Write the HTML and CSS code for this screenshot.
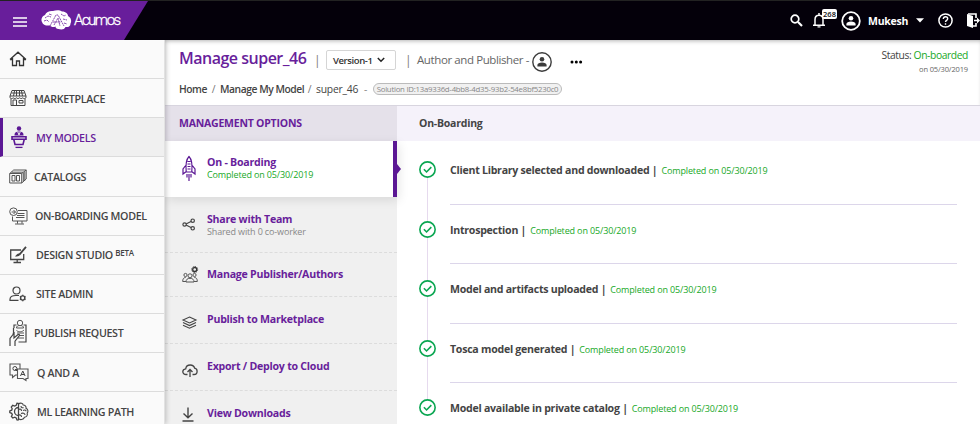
FILE: index.html
```html
<!DOCTYPE html>
<html lang="en">
<head>
<meta charset="utf-8">
<title>Acumos - Manage super_46</title>
<link rel="stylesheet" href="styles.css">
</head>
<body>
<header class="topbar">
  <div class="brand">
    <svg class="burger" width="14" height="10" viewBox="0 0 14 10"><path d="M0 1h14M0 5h14M0 9h14" stroke="#fff" stroke-width="1.5"/></svg>
    <svg class="logo" width="31" height="20" viewBox="0 0 31 20">
      <path d="M1 12C-.5 9 1.500 6 4 5c1-3 5-4.500 8-4 3-1 7-1 9 .5 4 0 6 2.500 6 4.500 3 1.500 4 5 2.500 7.500 0 3-2.500 4-5 3.500-1 2.500-4 3-7 2-2 0-3-1-3-2.500-2 1-4.500.5-5.500-1C5 16 2 15 1 12z" fill="#fff"/>
      <path d="M9 16l6-11h2l6 11M12 12h8M13 15l4-7 2 8M4 8l3-2 3 1M3 11l3-1 2 2M20 4l3 2 2-1M22 9l4 1M23 13l3 1M8 4l3 1" fill="none" stroke="#681e9b" stroke-width=".8" stroke-dasharray="2 .6"/>
    </svg>
    <span class="brand-name">Acumos</span>
  </div>
  <div class="tools">
    <svg class="t-search" width="13" height="13" viewBox="0 0 13 13"><circle cx="5" cy="5" r="3.800" fill="none" stroke="#fff" stroke-width="1.700"/><path d="M8 8l4 4" stroke="#fff" stroke-width="2.200"/></svg>
    <div class="bell">
      <svg width="12" height="15" viewBox="0 0 12 15"><path d="M0 12.200h12M2 12V6.500C2 3.500 3.500 2.200 6 2.200s4 1.300 4 4.300V12M6 0v2" fill="none" stroke="#fff" stroke-width="1.500"/><path d="M4.500 13.300h3v1.200h-3z" fill="#fff"/></svg>
      <span class="count">268</span>
    </div>
    <svg class="t-user" width="20" height="20" viewBox="0 0 20 20"><circle cx="10" cy="10" r="8.800" fill="none" stroke="#fff" stroke-width="1.800"/><circle cx="10" cy="7.200" r="2.300" fill="#fff"/><path d="M5.400 14.400v-1.300c0-1.600 2-2.500 4.600-2.500s4.600.9 4.600 2.500v1.300z" fill="#fff"/></svg>
    <span class="user-name">Mukesh</span>
    <svg class="t-caret" width="8" height="5" viewBox="0 0 8 5"><path d="M0 .3h8L4 4.600z" fill="#fff"/></svg>
    <svg class="t-help" width="15" height="15" viewBox="0 0 15 15"><circle cx="7.500" cy="7.500" r="6.600" fill="none" stroke="#fff" stroke-width="1.500"/><path d="M5.300 6c0-1.400 1-2.200 2.200-2.200S9.700 4.600 9.700 5.800c0 1.500-2.200 1.600-2.200 3.200M7.500 10.300v1.500" fill="none" stroke="#fff" stroke-width="1.400"/></svg>
    <svg class="t-exit" width="13" height="15" viewBox="0 0 13 15"><path d="M0 1l6 2v12l-6-2z" fill="#fff"/><path d="M1 1h8v4M9 10v3H6M7 7.500h5" fill="none" stroke="#fff" stroke-width="1.600"/><path d="M10 4.500l3 3-3 3z" fill="#fff"/></svg>
  </div>
</header>
<div class="layout">
  <nav class="sidebar">
    <a class="item home"><svg viewBox="0 0 18 16" width="18" height="16"><path d="M1 8.500L9 1.200l8 7.300M3.500 7v7.500h4V10h3v4.500h4V7M1 8.500h2.500M14.500 8.500H17" fill="none" stroke="#333" stroke-width="1.300"/></svg><span>HOME</span></a>
    <a class="item market"><svg viewBox="0 0 18 18" width="18" height="18"><path d="M3 1.500h12l2 5.500v1.800c-1 1-2.300 1-3.200 0-1 1-2.200 1-3.200 0-1 1-2.200 1-3.200 0-1 1-2.200 1-3.200 0-1 1-2.200 1-3.200 0V7zM2 10v6.500h14V10M1 7h16M4.500 7L5.500 2M7.500 7V2M10.500 7V2M13.500 7L12.500 2M2.500 4h13M4 16v-5h3.500v5M10 11.500h4V14h-4z" fill="none" stroke="#444" stroke-width="1"/></svg><span>MARKETPLACE</span></a>
    <a class="item models active"><svg viewBox="0 0 16 24" width="16" height="24"><circle cx="8" cy="3.500" r="2.200" fill="#5b1794"/><path d="M3.500 10.500V9.700c0-2 1.800-3.200 4.500-3.200s4.500 1.200 4.500 3.200v.8z" fill="#5b1794"/><path d="M6.800 7L8 10l1.200-3" fill="none" stroke="#f0f0f0" stroke-width="1"/><path d="M1 11.700h14v2.500H1zM2.800 14.500l1.200 5h8l1.200-5" fill="none" stroke="#5b1794" stroke-width="1.600"/><path d="M4.500 22.400h7" stroke="#5b1794" stroke-width="1.300"/></svg><span>MY MODELS</span></a>
    <a class="item catalogs"><svg viewBox="0 0 18 15" width="18" height="15"><path d="M.7 4.500h12v9.500H.7zM.7 4.500l4-3.500h12.500v9L12.700 14M12.700 4.500L17.200 1M14.300 4v8.500M15.800 2.500v8.800M2.500 3.200h12" fill="none" stroke="#555" stroke-width="1"/><path d="M3 6.500h3V12H3zM7.500 6.500h3V12h-3z" fill="none" stroke="#555" stroke-width="1"/></svg><span>CATALOGS</span></a>
    <a class="item onboard"><svg viewBox="0 0 19 18" width="19" height="18"><circle cx="4.500" cy="4.700" r="3.800" fill="none" stroke="#555"/><path d="M2.600 5h3.800M4.500 3l2 2-2 2M9 3.500h9V14H3.500V9.500M8.500 14v2.700M13 14v2.700M6 17h9M8.500 6.500h7M8 8.500h7.500M7 10.500h8.500" fill="none" stroke="#555"/></svg><span>ON-BOARDING MODEL</span></a>
    <a class="item design"><svg viewBox="0 0 18 18" width="18" height="18"><path d="M12 4H1.700v9.500h13V8M8.200 13.500v3M4.500 16.500h7.500" fill="none" stroke="#444" stroke-width="1.300"/><path d="M17 .8l-6.800 8" stroke="#444" stroke-width="1.800"/><path d="M10.700 7.600c.7 2.500-2 3.400-5 2.700 1.600-.3 2-3.300 5-2.700z" fill="#444"/></svg><span>DESIGN STUDIO <sup>BETA</sup></span></a>
    <a class="item admin"><svg viewBox="0 0 18 16" width="18" height="16"><circle cx="7.500" cy="4.500" r="3.500" fill="none" stroke="#444" stroke-width="1.200"/><path d="M9.500 14.300H1v-1C1 10.700 3.500 9.500 7 9.500h3" fill="none" stroke="#444" stroke-width="1.200"/><circle cx="13.700" cy="12" r="2.100" fill="none" stroke="#444" stroke-width="1.400"/><path d="M13.700 8.800v1M13.700 14.200v1M10.900 10.400l.9.500M15.600 13.100l.9.500M10.900 13.600l.9-.5M15.600 10.900l.9-.5" stroke="#444" stroke-width="1.500"/></svg><span>SITE ADMIN</span></a>
    <a class="item publish"><svg viewBox="0 0 19 28" width="19" height="28"><path d="M5 9V6h2.500M14.500 6H17v17H9.500M4.500 9v7" fill="none" stroke="#444" stroke-width="1.200"/><circle cx="11" cy="4" r="2.700" fill="none" stroke="#555"/><path d="M7.500 9c0-2 1.500-2.500 3.500-2.500s3.500.5 3.500 2.500zM7.500 11.500c2 1.800 5.500 1.800 7.500-.5M8 14h7M8.500 16.500H15M9 19h6" fill="none" stroke="#555" stroke-width="1"/><path d="M1 27v-7.500l3-4 1-2.500v6l4-3.500c1.500-.5 2 .6 1 1.700l-4 5V27" fill="#fafafa" stroke="#444" stroke-width="1.200"/></svg><span>PUBLISH REQUEST</span></a>
    <a class="item qa"><svg viewBox="0 0 20 18" width="20" height="18"><path d="M8 12H6.500L3.500 14.500V12H1V1h10v5" fill="none" stroke="#555" stroke-width="1.100"/><circle cx="5.900" cy="5.500" r="2" fill="none" stroke="#444"/><path d="M6 6l2 2" stroke="#444"/><path d="M8.500 6H19v9.500h-2V17.500l-3-2H8.500z" fill="none" stroke="#555" stroke-width="1.100"/><path d="M11.500 13l2.300-5 2.300 5M12.300 11.500h3" fill="none" stroke="#444"/></svg><span>Q AND A</span></a>
    <a class="item ml"><svg viewBox="0 0 20 19" width="20" height="19"><path d="M9.500 1v17.200M9.500 1.500L8 1.200l-.8 2-1.500.8-2-.7L2.300 5l.9 1.700-.5 1.500-1.900.7v1.700l1.900.7.6 1.500L2.400 14.500l1.400 1.500 2-.8 1.400.7.8 2 1.500.2M9.500 5.500A4 4 0 0 0 9.500 13.500" fill="none" stroke="#444" stroke-width="1.300"/><path d="M9.500 2c2-1.700 4.500-.5 4.700 1 2 0 3.300 1.700 2.800 3.200 2 1 2.500 3.400 1.200 5 .7 2-.8 4-2.700 4-1 2.500-4.500 3.200-6 1.500M12 4c0 2 2 2 2.500 1.500M9.500 7.500c2-1 3 0 3 1.500M14 8.500c1.500-.8 2.800-.2 3.300.7M12 11.500c2-1 4 0 4 1.500M9.500 13c2-.6 3 .5 3 2" fill="none" stroke="#444" stroke-width="1.100"/></svg><span>ML LEARNING PATH</span></a>
  </nav>
  <main class="main">
    <section class="page-head">
      <div class="head-left">
        <div class="title-row">
          <h1>Manage super_46</h1>
          <span class="bar">|</span>
          <span class="version">Version-1<svg width="8" height="6" viewBox="0 0 8 6"><path d="M.8 1L4 4.200 7.200 1" fill="none" stroke="#222" stroke-width="1.500"/></svg></span>
          <span class="bar bar2">|</span>
          <span class="author">Author and Publisher -</span>
          <svg class="avatar" width="20" height="20" viewBox="0 0 20 20"><circle cx="10" cy="10" r="9.200" fill="none" stroke="#3c3c3c" stroke-width="1.400"/><circle cx="10" cy="7.200" r="2.300" fill="#3c3c3c"/><path d="M5.400 14.400v-1.300c0-1.600 2-2.500 4.600-2.500s4.600.9 4.600 2.500v1.300z" fill="#3c3c3c"/></svg>
          <svg class="dots" width="13" height="4" viewBox="0 0 13 4"><circle cx="2" cy="2" r="1.500"/><circle cx="6.300" cy="2" r="1.500"/><circle cx="10.600" cy="2" r="1.500"/></svg>
        </div>
        <div class="crumbs">
          <span class="c-home">Home</span><span class="sep">/</span><span class="c-manage">Manage My Model</span><span class="sep">/</span><span class="c-name">super_46</span><span class="dash">-</span><span class="chip">Solution ID:13a9336d-4bb8-4d35-93b2-54e8bf5230c0</span>
        </div>
      </div>
      <div class="status">
        <div class="status-line">Status: <b>On-boarded</b></div>
        <div class="status-date">on 05/30/2019</div>
      </div>
    </section>
    <section class="body">
      <aside class="options">
        <h2>MANAGEMENT OPTIONS</h2>
        <div class="opt current">
          <svg viewBox="0 0 14 28" width="14" height="28"><path d="M7 1.500C4 4.500 3.500 9 4.200 17h5.600C10.500 9 10 4.500 7 1.500zM3.700 10.500L1 14v5l3-2.300M10.300 10.500L13 14v5l-3-2.300M5.500 6.500h3M5.500 9h3M5.500 11.500h3M5.500 14h3M5 19v3.500M7 19v7M9 19v3.500" fill="none" stroke="#5b1794" stroke-width="1.200"/></svg>
          <div><b>On - Boarding</b><span class="done">Completed on 05/30/2019</span></div>
        </div>
        <div class="opt share">
          <svg viewBox="0 0 14 13" width="14" height="13"><path d="M3 6.500L10.500 2.800M3 6.500l7.500 3.700" stroke="#444" stroke-width="1.200"/><g fill="#f0f0f0" stroke="#444" stroke-width="1.200"><circle cx="2.600" cy="6.500" r="1.700"/><circle cx="10.700" cy="2.700" r="1.700"/><circle cx="10.700" cy="10.300" r="1.700"/></g></svg>
          <div><b>Share with Team</b><span class="note">Shared with 0 co-worker</span></div>
        </div>
        <div class="opt authors">
          <svg viewBox="0 0 17 17" width="17" height="17"><g fill="none" stroke="#555" stroke-width="1"><circle cx="3.500" cy="9" r="1.600"/><circle cx="8" cy="9.800" r="2"/><circle cx="12.500" cy="9" r="1.600"/><path d="M4 16c0-2.500 1.500-3.700 4-3.700s4 1.200 4 3.700zM4 15.500H.7c0-2.500.8-4 3-4M12 15.500h3.300c0-2.500-.8-4-3-4"/><circle cx="12.700" cy="3.500" r="2" stroke="#333" stroke-width="1.300"/></g><circle cx="12.700" cy="3.500" r="3" fill="none" stroke="#333" stroke-width="1" stroke-dasharray="1.200 1.100"/></svg>
          <div><b>Manage Publisher/Authors</b></div>
        </div>
        <div class="opt market-opt">
          <svg viewBox="0 0 15 13" width="15" height="13"><path d="M7.500 1l6.500 3-6.500 3L1 4zM1 6.600l6.500 3 6.500-3M1 9.200l6.500 3 6.500-3" fill="none" stroke="#444" stroke-width="1.100"/></svg>
          <div><b>Publish to Marketplace</b></div>
        </div>
        <div class="opt cloud">
          <svg viewBox="0 0 16 13" width="16" height="13"><path d="M5.500 10.500H4C2.200 10.500.8 9.300.8 7.700S2 5 3.700 4.800C4 2.600 5.800 1 8.200 1c2.300 0 3.900 1.200 4.400 3.200 1.500.3 2.500 1.500 2.500 3 0 2-1.300 3.300-3.100 3.300h-1.500" fill="none" stroke="#444" stroke-width="1.300"/><path d="M8 13V5.800M5.500 8L8 5.500 10.500 8" fill="none" stroke="#444" stroke-width="1.300"/></svg>
          <div><b>Export / Deploy to Cloud</b></div>
        </div>
        <div class="opt downloads">
          <svg viewBox="0 0 12 15" width="12" height="15"><path d="M6 .5v10M1.500 6.500L6 10.800l4.500-4.300M.5 14h11" fill="none" stroke="#444" stroke-width="1.400"/></svg>
          <div><b>View Downloads</b></div>
        </div>
      </aside>
      <div class="detail">
        <h3>On-Boarding</h3>
        <ol class="steps">
          <li><i class="mark"><svg viewBox="0 0 16 16" width="17" height="17"><circle cx="8" cy="8" r="7.200"/><path d="M4.600 7.800l2.500 2.500 4.500-4.500"/></svg></i><p><b>Client Library selected and downloaded |</b><span>Completed on 05/30/2019</span></p></li>
          <li><i class="mark"><svg viewBox="0 0 16 16" width="17" height="17"><circle cx="8" cy="8" r="7.200"/><path d="M4.600 7.800l2.500 2.500 4.500-4.500"/></svg></i><p><b>Introspection |</b><span>Completed on 05/30/2019</span></p></li>
          <li><i class="mark"><svg viewBox="0 0 16 16" width="17" height="17"><circle cx="8" cy="8" r="7.200"/><path d="M4.600 7.800l2.500 2.500 4.500-4.500"/></svg></i><p><b>Model and artifacts uploaded |</b><span>Completed on 05/30/2019</span></p></li>
          <li><i class="mark"><svg viewBox="0 0 16 16" width="17" height="17"><circle cx="8" cy="8" r="7.200"/><path d="M4.600 7.800l2.500 2.500 4.500-4.500"/></svg></i><p><b>Tosca model generated |</b><span>Completed on 05/30/2019</span></p></li>
          <li><i class="mark"><svg viewBox="0 0 16 16" width="17" height="17"><circle cx="8" cy="8" r="7.200"/><path d="M4.600 7.800l2.500 2.500 4.500-4.500"/></svg></i><p><b>Model available in private catalog |</b><span>Completed on 05/30/2019</span></p></li>
        </ol>
      </div>
    </section>
  </main>
</div>
</body>
</html>
```
FILE: styles.css
```css
* { box-sizing: border-box; }
body { margin: 0; width: 980px; height: 424px; overflow: hidden; font-family: "Open Sans", "Noto Sans", sans-serif; color: #444; background: #fff; }
h1, h2, h3, p, ol { margin: 0; padding: 0; }
svg { display: block; flex: none; overflow: visible; }
span, b { white-space: nowrap; }

.topbar { height: 40px; background: #04000a; border-top: 1px solid #222; display: flex; justify-content: space-between; align-items: center; overflow: hidden; }
.brand { width: 148px; height: 39px; background: #681e9b; clip-path: polygon(0 0, 100% 0, 124px 100%, 0 100%); display: flex; align-items: center; padding-left: 13px; }
.burger { margin-top: 2px; }
.logo { margin-left: 14px; margin-top: -1px; }
.brand-name { margin: -2px 0 0 2px; font: 300 15px/20px Roboto, sans-serif; color: #fff; -webkit-text-stroke: .3px #fff; letter-spacing: -1.400px; transform-origin: left; letter-spacing: -1.500px; }
.tools { display: flex; align-items: center; height: 39px; width: 190px; }
.bell { position: relative; margin-left: 10px; }
.count { position: absolute; left: 9px; top: -4px; width: 15px; height: 10px; border-radius: 2px; background: #fff; color: #111; font-size: 7.500px; font-weight: 600; line-height: 10px; text-align: center; }
.t-user { margin-left: 16px; }
.user-name { width: 50px; margin-left: 7px; color: #fff; font-size: 10.500px; letter-spacing: -.25px; font-weight: 700; line-height: 16px; }
.t-help { margin-left: 14px; }
.t-exit { margin-left: 14px; }

.layout { display: flex; height: 384px; overflow: hidden; }
.sidebar { width: 165px; flex: none; background: #fafafa; border-right: 1px solid #e2e2e2; box-shadow: 1px 0 5px rgba(0,0,0,.22); position: relative; z-index: 2; overflow: hidden; }
.item { height: 39.130px; display: flex; align-items: center; padding-left: 9px; border-bottom: 1px solid #dcdcdc; font-size: 10.700px; font-weight: 600; line-height: 16px; letter-spacing: -.33px; color: #444; }
.item span { padding-top: 1px; }
.item svg { margin-right: 8px; }
.item.market svg { margin-right: 7px; }
.item.active { background: #f0f0f0; color: #681e9b; padding-left: 8px; border-left: 3px solid #5b1794; }
.item.active svg { margin-right: 9px; }
.item.catalogs svg { margin-right: 7px; }
.item.onboard svg { margin-right: 7px; }
.item.design svg, .item.admin svg { margin-right: 9px; }
.item.publish svg { margin-right: 6px; }
.item sup { font-size: 8px; line-height: 8px; vertical-align: 3px; }

.main { width: 815px; flex: none; }
.page-head { height: 66px; display: flex; justify-content: space-between; border-bottom: 1px solid #d8d5df; box-shadow: inset 0 3px 4px -2px rgba(0,0,0,.3); }
.head-left { padding: 8px 0 0 14px; }
.title-row { display: flex; align-items: center; height: 24px; }
h1 { width: 127px; margin-top: -4px; font-size: 16px; letter-spacing: -.5px; font-weight: 600; line-height: 22px; color: #681e9b; white-space: nowrap; }
.bar { margin-left: 8px; width: 12px; font-size: 12px; color: #777; }
.version { width: 70px; height: 20px; border: 1px solid #d5d5d5; border-radius: 2px; display: flex; align-items: center; justify-content: space-between; padding: 0 10px 0 6px; font-size: 9.500px; letter-spacing: -.4px; font-weight: 600; color: #333; }
.bar2 { margin-left: 9px; }
.author { width: 108px; font-size: 11.500px; letter-spacing: -.4px; line-height: 16px; color: #666; }
.avatar { margin: 3px 0 0 7px; }
.dots { margin: 3px 0 0 18px; }
.crumbs { display: flex; align-items: center; height: 16px; margin-top: 9px; font-size: 10.300px; letter-spacing: -.2px; line-height: 16px; }
.crumbs .c-home { width: 28px; }
.crumbs .c-home, .crumbs .c-manage { font-weight: 600; letter-spacing: -.45px; }
.c-manage { width: 83px; }
.c-name { width: 43px; }
.sep { width: 13px; text-align: center; color: #777; }
.dash { width: 13px; text-align: center; color: #888; }
.chip { width: 189px; height: 12px; margin-left: 1px; border: 1px solid #bbb; border-radius: 6px; background: #f1f1f1; font-size: 7.800px; line-height: 10px; letter-spacing: -.25px; text-align: center; color: #888; }
.status { padding: 7px 12px 0 0; text-align: right; }
.status-line { font-size: 10.300px; letter-spacing: -.4px; line-height: 16px; }
.status-line b { font-weight: 400; color: #17a81f; }
.status-date { font-size: 7.500px; letter-spacing: -.15px; line-height: 13px; color: #666; }

.body { display: flex; height: 318px; overflow: hidden; }
.options { width: 232px; flex: none; background: #f0f0f0; }
h2 { height: 35px; padding-left: 14px; background: #e5e1ea; font-size: 10.500px; letter-spacing: -.22px; font-weight: 700; line-height: 35px; color: #681e9b; white-space: nowrap; }
.opt { display: flex; padding-left: 17px; border-bottom: 1px dashed #dcdcdc; }
.opt div { display: flex; flex-direction: column; align-items: flex-start; }
.opt b { font-size: 10.600px; letter-spacing: -.24px; line-height: 14px; font-weight: 700; color: #681e9b; }
.opt span { font-size: 9px; letter-spacing: -.14px; line-height: 11px; }
.done { color: #17a81f; }
.note { color: #888; }
.current { position: relative; height: 56px; padding-top: 14px; background: #fff; border-bottom: 0; border-right: 4px solid #5b1794; box-shadow: 2px 3px 10px rgba(0,0,0,.1); }
.current::after { content: ""; position: absolute; right: -8px; top: 23px; border: 5px solid transparent; border-left: 4px solid #5b1794; border-right: 0; }
.current svg { margin-right: 11px; }
.share { height: 56px; padding-top: 15px; }
.share svg { margin: 6px 11px 0 0; }
.authors { height: 44px; padding-top: 14px; }
.authors svg { margin: -1px 8px 0 0; }
.market-opt { height: 47px; padding-top: 15px; }
.market-opt svg { margin: 4px 10px 0 0; }
.cloud { height: 47px; padding-top: 15px; }
.cloud svg { margin: 5px 9px 0 0; }
.downloads { padding-top: 15px; border-bottom: 0; }
.downloads svg { margin: 1px 13px 0 0; }

.detail { flex: 1; }
h3 { height: 35px; padding-left: 22px; background: #f5f2fa; font-size: 10.500px; letter-spacing: -.22px; font-weight: 700; line-height: 35px; color: #444; }
.steps { list-style: none; padding: 20px 23px 0 22px; }
.steps li { display: flex; height: 59.500px; }
.mark { width: 31px; flex: none; background: linear-gradient(#e6daee, #e6daee) 8px 17px / 1px 100% no-repeat; }
.steps li:last-child { height: 28px; }
.steps li:last-child .mark { background: none; }
.mark svg { fill: none; stroke: #0aa651; stroke-width: 1.500; }
.steps p { flex: 1; height: 43.500px; display: flex; align-items: baseline; border-bottom: 1px solid #dcd6ea; line-height: 19px; }
.steps li:last-child p { height: 28px; border: 0; }
.steps p b { font-size: 10.600px; letter-spacing: -.26px; font-weight: 700; color: #444; margin-right: 4px; }
.steps p span { font-size: 9px; letter-spacing: -.14px; color: #17a81f; }
```
